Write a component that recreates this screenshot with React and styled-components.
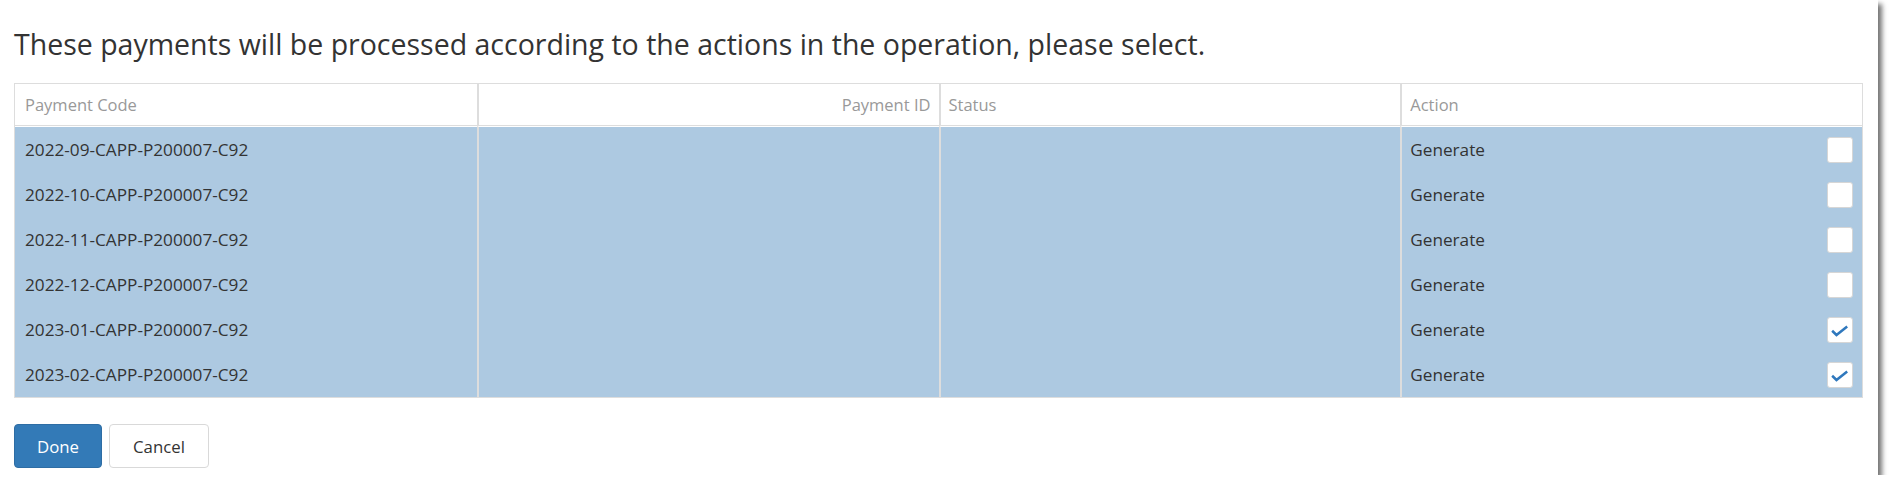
import React from 'react';
import styled, { createGlobalStyle } from 'styled-components';

const GlobalStyle = createGlobalStyle`
  body {
    margin: 0;
    background: #fff;
    font-family: 'Open Sans', 'Noto Sans', sans-serif;
    color: #333;
  }
`;

const Card = styled.div`
  width: 1878px;
  box-sizing: border-box;
  padding: 27px 15px 7px 14px;
  background: #fff;
  box-shadow: 4px 4px 5px rgba(0, 0, 0, 0.55);
`;

const Title = styled.h3`
  margin: 0 0 22px;
  font-size: 28.5px;
  font-weight: 400;
  line-height: 34px;
  color: #333;
`;

const Table = styled.table`
  width: 100%;
  table-layout: fixed;
  border-collapse: separate;
  border-spacing: 0;
  border: 1px solid #ddd;

  tbody tr:first-child td {
    border-top: 1px solid #fff;
    height: 46px;
  }
`;

const HeadCell = styled.th`
  box-sizing: border-box;
  height: 42px;
  padding: 0 8px;
  font-size: 16.5px;
  font-weight: 400;
  color: #999;
  text-align: ${props => props.$align || 'left'};
  border-bottom: 1px solid #ddd;
  white-space: nowrap;

  & + & {
    border-left: 2px solid #ddd;
  }

  &:first-child {
    padding-left: 10px;
  }
`;

const Row = styled.tr`
  background: ${props => (props.$selected ? '#adc9e1' : '#fff')};
`;

const Cell = styled.td`
  box-sizing: border-box;
  height: 45px;
  padding: 0 8px;
  font-size: 17.2px;
  color: #333;
  white-space: nowrap;

  & + & {
    border-left: 2px solid #ddd;
  }

  &:first-child {
    padding-left: 10px;
  }

  &:last-child {
    padding-right: 9px;
  }
`;

const ActionWrap = styled.div`
  display: flex;
  align-items: center;
  justify-content: space-between;
`;

const Checkbox = styled.span`
  width: 26px;
  height: 26px;
  box-sizing: border-box;
  border: 1px solid #d6d6d6;
  border-radius: 3px;
  background: #fff;
  display: flex;
  align-items: center;
  justify-content: center;
`;

const Buttons = styled.div`
  display: flex;
  gap: 7px;
  margin-top: 26px;
`;

const Button = styled.button`
  height: 44px;
  padding: 0 ${props => (props.$primary ? '22px' : '23px')};
  font-family: inherit;
  font-size: 16.8px;
  border-radius: 4px;
  border: 1px solid ${props => (props.$primary ? '#2e6da4' : '#d9d9d9')};
  background: ${props => (props.$primary ? '#337ab7' : '#fff')};
  color: ${props => (props.$primary ? '#fff' : '#333')};
`;

const payments = [
  { code: '2022-09-CAPP-P200007-C92', checked: false },
  { code: '2022-10-CAPP-P200007-C92', checked: false },
  { code: '2022-11-CAPP-P200007-C92', checked: false },
  { code: '2022-12-CAPP-P200007-C92', checked: false },
  { code: '2023-01-CAPP-P200007-C92', checked: true },
  { code: '2023-02-CAPP-P200007-C92', checked: true }
];

const Check = () => (
  <svg width="26" height="26" viewBox="0 0 26 26">
    <path d="M4.5 13.8 L9.2 18.4 L20.8 9.2" fill="none" stroke="#2f78bd" strokeWidth="2.7" />
  </svg>
);

export default function App() {
  return (
    <>
      <GlobalStyle />
      <Card>
        <Title>These payments will be processed according to the actions in the operation, please select.</Title>
        <Table>
          <thead>
            <tr>
              <HeadCell>Payment Code</HeadCell>
              <HeadCell $align="right">Payment ID</HeadCell>
              <HeadCell>Status</HeadCell>
              <HeadCell>Action</HeadCell>
            </tr>
          </thead>
          <tbody>
            {payments.map(p => (
              <Row key={p.code} $selected>
                <Cell>{p.code}</Cell>
                <Cell />
                <Cell />
                <Cell>
                  <ActionWrap>
                    Generate
                    <Checkbox>{p.checked && <Check />}</Checkbox>
                  </ActionWrap>
                </Cell>
              </Row>
            ))}
          </tbody>
        </Table>
        <Buttons>
          <Button $primary>Done</Button>
          <Button>Cancel</Button>
        </Buttons>
      </Card>
    </>
  );
}
